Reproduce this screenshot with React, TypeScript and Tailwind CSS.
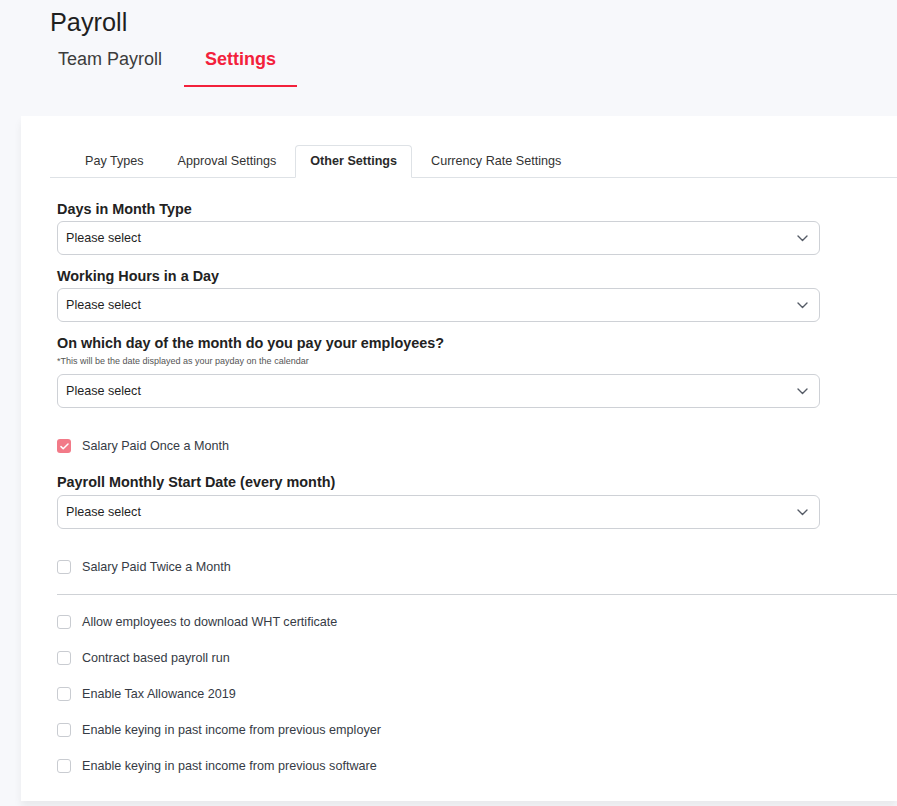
import React, { useState } from 'react';

const FONT = { fontFamily: '"Liberation Sans", Arial, Helvetica, sans-serif' };

const Chevron: React.FC = () => (
  <svg width="11" height="7" viewBox="0 0 11 7" fill="none" className="shrink-0">
    <path d="M1 1l4.5 4.5L10 1" stroke="#555b66" strokeWidth="1.4" strokeLinecap="round" strokeLinejoin="round" />
  </svg>
);

const Select: React.FC<{ className?: string }> = ({ className = '' }) => (
  <div
    className={`flex h-[34px] items-center justify-between rounded-[6px] border border-[#ced1d6] bg-white pl-[8px] pr-[11px] ${className}`}
  >
    <span className="text-[12.6px] text-[#1f1f1f]">Please select</span>
    <Chevron />
  </div>
);

const Label: React.FC<{ children: React.ReactNode }> = ({ children }) => (
  <div className="text-[14.4px] font-bold leading-[20px] text-[#222]">{children}</div>
);

const Check: React.FC<{ label: string; checked?: boolean; className?: string }> = ({
  label,
  checked = false,
  className = '',
}) => {
  const [on, setOn] = useState(checked);
  return (
    <label className={`flex h-[20px] cursor-pointer items-center gap-[11px] ${className}`} onClick={() => setOn(!on)}>
      {on ? (
        <span className="flex h-[14px] w-[14px] items-center justify-center rounded-[3px] bg-[#f27a88]">
          <svg width="9" height="7" viewBox="0 0 9 7" fill="none">
            <path d="M1 3.6l2.2 2.1L8 1" stroke="white" strokeWidth="1.5" strokeLinecap="round" strokeLinejoin="round" />
          </svg>
        </span>
      ) : (
        <span className="h-[14px] w-[14px] rounded-[3px] border border-[#c9ccd1] bg-white" />
      )}
      <span className="text-[12.6px] text-[#363b45]">{label}</span>
    </label>
  );
};

const subTabs = ['Pay Types', 'Approval Settings', 'Other Settings', 'Currency Rate Settings'];

const extraOptions = [
  'Allow employees to download WHT certificate',
  'Contract based payroll run',
  'Enable Tax Allowance 2019',
  'Enable keying in past income from previous employer',
  'Enable keying in past income from previous software',
];

export default function App() {
  const [tab, setTab] = useState('Settings');
  const [subTab, setSubTab] = useState('Other Settings');

  return (
    <div className="min-h-screen overflow-hidden bg-[#f7f8fb]" style={FONT}>
      {/* Header */}
      <div className="pt-[6px]">
        <h1 className="pl-[50px] text-[25.3px] leading-[32px] text-[#1f1f1f]">Payroll</h1>
        <div className="flex gap-[1px] pl-[37px]">
          {['Team Payroll', 'Settings'].map((t) => (
            <button
              key={t}
              onClick={() => setTab(t)}
              className={`border-b-2 px-[21px] pb-[14px] pt-[9px] text-[18px] leading-[24px] ${
                tab === t ? 'border-[#f3213b] font-bold text-[#f3213b]' : 'border-transparent text-[#3c3c3c]'
              }`}
            >
              {t}
            </button>
          ))}
        </div>
      </div>

      {/* Card */}
      <div className="ml-[21px] mt-[29px] bg-white pb-[25px] pl-[29px] pt-[29px] shadow-[0_6px_8px_rgba(0,0,0,0.06)]">
        <div className="flex gap-[4px] border-b border-[#dee2e6] pl-[20px]">
          {subTabs.map((t) => (
            <button
              key={t}
              onClick={() => setSubTab(t)}
              className={`-mb-px h-[33px] rounded-t-[4px] border px-[14px] text-[12.6px] ${
                subTab === t
                  ? 'border-[#dee2e6] border-b-white bg-white font-bold text-[#2a2a2a]'
                  : 'border-transparent text-[#333]'
              }`}
            >
              {t}
            </button>
          ))}
        </div>

        <div className="w-[770px] pl-[7px]">
          <div className="mt-[21px]">
            <Label>Days in Month Type</Label>
            <Select className="mt-[2px]" />
          </div>
          <div className="mt-[11px]">
            <Label>Working Hours in a Day</Label>
            <Select className="mt-[2px]" />
          </div>
          <div className="mt-[11px]">
            <Label>On which day of the month do you pay your employees?</Label>
            <div className="mt-[2px] text-[9px] leading-[12px] text-[#555]">
              *This will be the date displayed as your payday on the calendar
            </div>
            <Select className="mt-[7px]" />
          </div>

          <Check label="Salary Paid Once a Month" checked className="mt-[28px]" />

          <div className="mt-[16px]">
            <Label>Payroll Monthly Start Date (every month)</Label>
            <Select className="mt-[3px]" />
          </div>

          <Check label="Salary Paid Twice a Month" className="mt-[28px]" />
        </div>

        <div className="ml-[7px] mt-[17px] border-t border-[#cfd2d6]" />

        <div className="flex flex-col gap-[16px] pl-[7px] pt-[17px]">
          {extraOptions.map((o) => (
            <Check key={o} label={o} />
          ))}
        </div>
      </div>
    </div>
  );
}
